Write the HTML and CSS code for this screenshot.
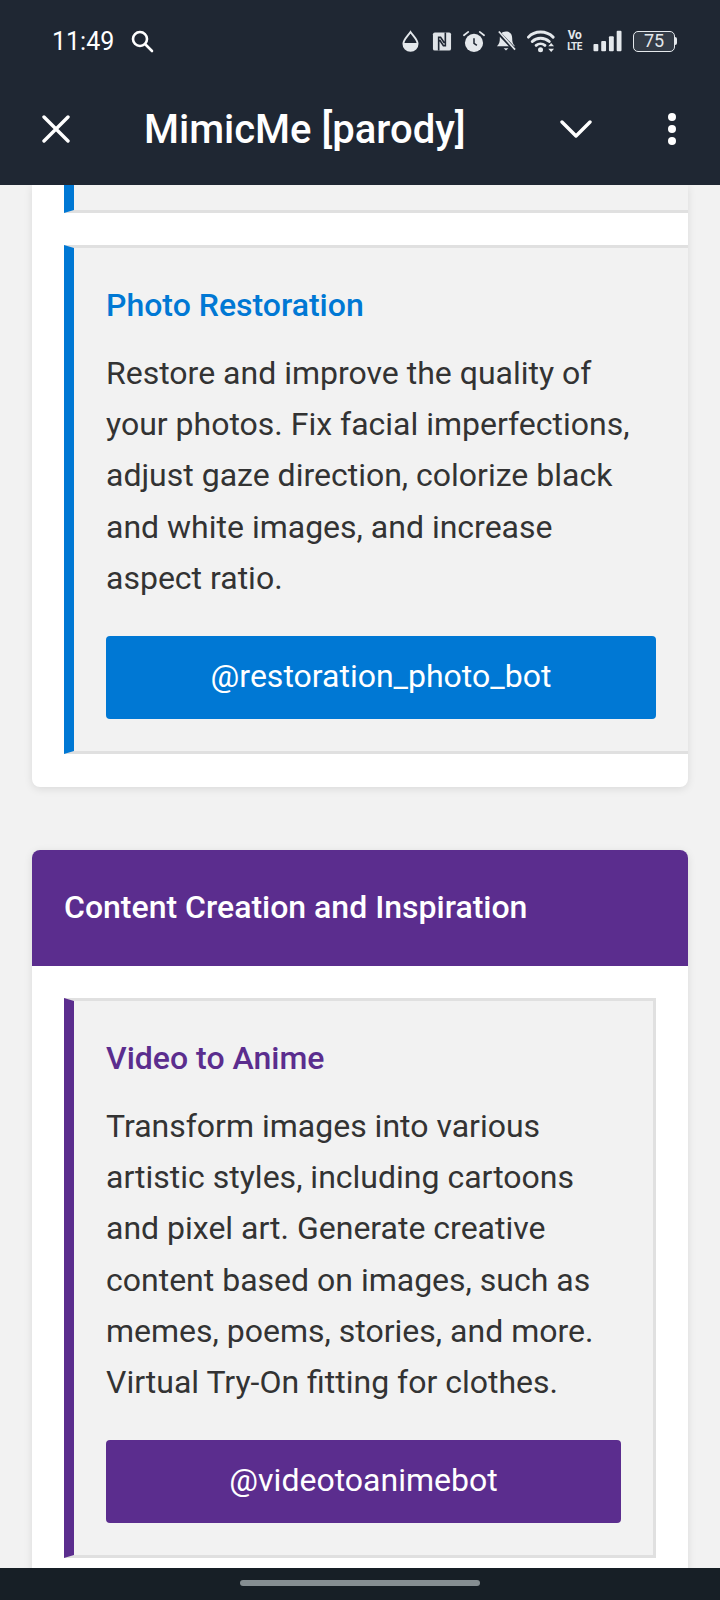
FILE: index.html
```html
<!DOCTYPE html>
<html lang="en">
<head>
  <meta charset="UTF-8" />
  <meta name="viewport" content="width=device-width, initial-scale=1" />
  <title>MimicMe [parody]</title>
  <link rel="stylesheet" href="styles.css">
</head>
<body>

  <div class="app">
    <header class="top-bar">
      <div class="status-bar">
        <span class="clock">11:49</span>
        <svg class="search-icon" width="24" height="24" viewBox="0 0 24 24" fill="none" stroke="#fff" stroke-width="2.6" stroke-linecap="round">
          <circle cx="10" cy="10" r="7"/>
          <path d="M15.5 15.5 L22 22"/>
        </svg>

        <div class="status-icons">
          <svg class="drop-icon" width="17" height="22" viewBox="0 0 18 22">
            <path d="M9 1.5 C6 6 1.5 9.5 1.5 14 A7.5 7.5 0 0 0 16.5 14 C16.5 9.5 12 6 9 1.5 Z" fill="none" stroke="#e4e8ec" stroke-width="2"/>
            <path d="M1.5 13 H16.5 V14 A7.5 7.5 0 0 1 1.5 14 Z" fill="#e4e8ec"/>
          </svg>
          <svg width="20" height="21" viewBox="0 0 21 21">
            <path d="M1 3 Q1 1 3 1 H18 Q20 1 20 3 V18 Q20 20 18 20 H3 Q1 20 1 18 Z" fill="#dfe3e7"/>
            <path d="M7 20 V6 H9 L13 12 M14 1 V15 H12 L8 9" fill="none" stroke="#1f2733" stroke-width="1.7"/>
          </svg>
          <svg width="22" height="23" viewBox="0 0 23 23">
            <circle cx="11.5" cy="13" r="9.5" fill="#e4e8ec"/>
            <path d="M11.5 8 V13.5 L14.5 15.5" fill="none" stroke="#1f2733" stroke-width="1.6"/>
            <path d="M1 5 L5.5 1.5 M22 5 L17.5 1.5" stroke="#e4e8ec" stroke-width="1.8" stroke-linecap="round"/>
          </svg>
          <svg width="20" height="22" viewBox="0 0 21 22">
            <path d="M10.5 1 C6 1 4 4 4 8 C4 12 3.5 14 1 16.5 H20 C17.5 14 17 12 17 8 C17 4 15 1 10.5 1 Z" fill="#e4e8ec"/>
            <path d="M8 18.5 H13 L10.5 21 Z" fill="#e4e8ec"/>
            <path d="M2 1.5 L20 20.5" stroke="#1f2733" stroke-width="4"/>
            <path d="M3 1 L20 20" stroke="#e4e8ec" stroke-width="1.8"/>
          </svg>
          <svg width="29" height="24" viewBox="0 0 30 24">
            <path d="M1.5 8 C8 1 20 1 27 8 M5.5 12.5 C10 8 18 8 23 12.5 M9.5 16.5 C12 14.5 16 14.5 18.5 16.5" fill="none" stroke="#e4e8ec" stroke-width="3" stroke-linecap="round"/>
            <circle cx="14" cy="21" r="2.6" fill="#e4e8ec"/>
            <path d="M22 17.5 L25 14 L28 17.5 Z M22 20 L25 23.5 L28 20 Z" fill="#e4e8ec"/>
          </svg>
          <span class="volte"><span class="volte-top">Vo</span><span class="volte-bottom">LTE</span></span>
          <svg class="signal-icon" width="29" height="22" viewBox="0 0 30 22" fill="#e4e8ec">
            <rect x="0.5" y="14" width="5" height="7.5" rx="1"/>
            <rect x="8.5" y="11" width="5" height="10.5" rx="1"/>
            <rect x="16.5" y="6" width="5" height="15.5" rx="1"/>
            <rect x="24.5" y="0.5" width="5" height="21" rx="1"/>
          </svg>
          <div class="battery">
            <div class="battery-body">75</div>
            <div class="battery-tip"></div>
          </div>
        </div>
      </div>

      <div class="toolbar">
        <svg class="close-icon" width="28" height="28" viewBox="0 0 28 28" stroke="#fff" stroke-width="3.4" stroke-linecap="round">
          <path d="M2 2 L26 26 M26 2 L2 26"/>
        </svg>
        <h1 class="page-title">MimicMe [parody]</h1>
        <svg class="chevron-icon" width="32" height="20" viewBox="0 0 32 20" fill="none" stroke="#fff" stroke-width="3.4" stroke-linecap="round" stroke-linejoin="round">
          <path d="M2 3 L16 17 L30 3"/>
        </svg>
        <div class="menu-dots">
          <span></span><span></span><span></span>
        </div>
      </div>
    </header>

    <main class="scroll-area">
      <section class="card card-cut">
        <div class="bot-box blue wide box-cut"></div>

        <div class="bot-box blue wide">
          <h3 class="bot-title">Photo Restoration</h3>
          <p class="bot-text">Restore and improve the quality of your photos. Fix facial imperfections, adjust gaze direction, colorize black and white images, and increase aspect ratio.</p>
          <a class="bot-link" href="#">@restoration_photo_bot</a>
        </div>
      </section>

      <section class="card">
        <h2 class="card-header">Content Creation and Inspiration</h2>
        <div class="card-body">
          <div class="bot-box purple">
            <h3 class="bot-title">Video to Anime</h3>
            <p class="bot-text">Transform images into various artistic styles, including cartoons and pixel art. Generate creative content based on images, such as memes, poems, stories, and more. Virtual Try-On fitting for clothes.</p>
            <a class="bot-link" href="#">@videotoanimebot</a>
          </div>
        </div>
      </section>
    </main>

    <footer class="nav-bar">
      <div class="home-pill"></div>
    </footer>
  </div>

</body>
</html>
```

FILE: styles.css
```css
* {
  box-sizing: border-box;
}

body {
  margin: 0;
  font-family: Roboto, 'Liberation Sans', sans-serif;
  background: #f2f2f2;
  color: #333;
}

.app {
  width: 720px;
  height: 1600px;
  display: flex;
  flex-direction: column;
  overflow: hidden;
}

/* Status bar and toolbar */
.top-bar {
  height: 185px;
  flex-shrink: 0;
  background: #1f2733;
  color: white;
}

.status-bar {
  height: 82px;
  padding: 0 43px 0 52px;
  display: flex;
  align-items: center;
}

.clock {
  font-size: 25px;
  width: 78px;
}

.status-icons {
  margin-left: auto;
  display: flex;
  align-items: center;
  gap: 11px;
}

.drop-icon {
  margin-right: 2px;
}

.volte {
  width: 15px;
  display: flex;
  flex-direction: column;
  align-items: center;
  font-weight: 700;
  color: #e4e8ec;
}

.volte-top {
  font-size: 12px;
  line-height: 11px;
  letter-spacing: -0.5px;
}

.volte-bottom {
  font-size: 10px;
  line-height: 11px;
  letter-spacing: -0.5px;
}

.battery {
  display: flex;
  align-items: center;
}

.battery-body {
  width: 42px;
  height: 21px;
  border: 1.5px solid #e4e8ec;
  border-radius: 5px;
  background: #333b46;
  color: #e4e8ec;
  font-size: 18px;
  line-height: 18px;
  text-align: center;
}

.battery-tip {
  width: 2px;
  height: 8px;
  background: #e4e8ec;
  border-radius: 0 2px 2px 0;
}

.toolbar {
  height: 94px;
  padding: 0 44px 0 42px;
  display: flex;
  align-items: center;
}

.page-title {
  margin: 0 0 0 74px;
  font-size: 40px;
  font-weight: 500;
  color: white;
}

.chevron-icon {
  margin-left: auto;
}

.menu-dots {
  margin-left: 76px;
  display: flex;
  flex-direction: column;
  gap: 4px;
}

.menu-dots span {
  width: 8px;
  height: 8px;
  border-radius: 50%;
  background: white;
}

/* Scrolling content */
.scroll-area {
  flex: 1;
  min-height: 0;
  overflow: hidden;
  padding: 0 32px;
}

.card {
  background: white;
  border-radius: 8px;
  box-shadow: 0 2px 8px rgba(0, 0, 0, 0.1);
  overflow: hidden;
}

.card-cut {
  padding-bottom: 33px;
  margin-bottom: 63px;
  border-radius: 0 0 8px 8px;
  padding-left: 32px;
}

.card-header {
  margin: 0;
  height: 116px;
  padding: 0 32px 2px;
  display: flex;
  align-items: center;
  background: #5b2d8e;
  color: white;
  font-size: 32px;
  font-weight: 500;
}

.card-body {
  padding: 32px;
}

.bot-box {
  background: #f2f2f2;
  border: 3px solid #e0e0e0;
  border-left-width: 10px;
  padding: 32px;
}

.bot-box.blue {
  border-left-color: #0078d4;
}

.bot-box.purple {
  border-left-color: #5b2d8e;
}

.bot-box.wide {
  margin-right: -3px;
}

.box-cut {
  height: 28px;
  padding: 0;
  border-top: none;
  margin-bottom: 32px;
}

.bot-title {
  margin: 0 0 18px;
  font-size: 32px;
  line-height: 50px;
  font-weight: 500;
}

.blue .bot-title {
  color: #0078d4;
}

.purple .bot-title {
  color: #5b2d8e;
}

.bot-text {
  margin: 0 0 32px;
  font-size: 32px;
  line-height: 51.2px;
}

.bot-link {
  display: block;
  height: 83px;
  line-height: 81px;
  border-radius: 4px;
  text-align: center;
  text-decoration: none;
  color: white;
  font-size: 32px;
}

.blue .bot-link {
  background: #0078d4;
}

.purple .bot-link {
  background: #5b2d8e;
}

/* Navigation bar */
.nav-bar {
  height: 32px;
  flex-shrink: 0;
  background: #171f26;
  display: flex;
  justify-content: center;
  padding-top: 12px;
}

.home-pill {
  width: 240px;
  height: 6px;
  border-radius: 3px;
  background: #868e92;
}
```
